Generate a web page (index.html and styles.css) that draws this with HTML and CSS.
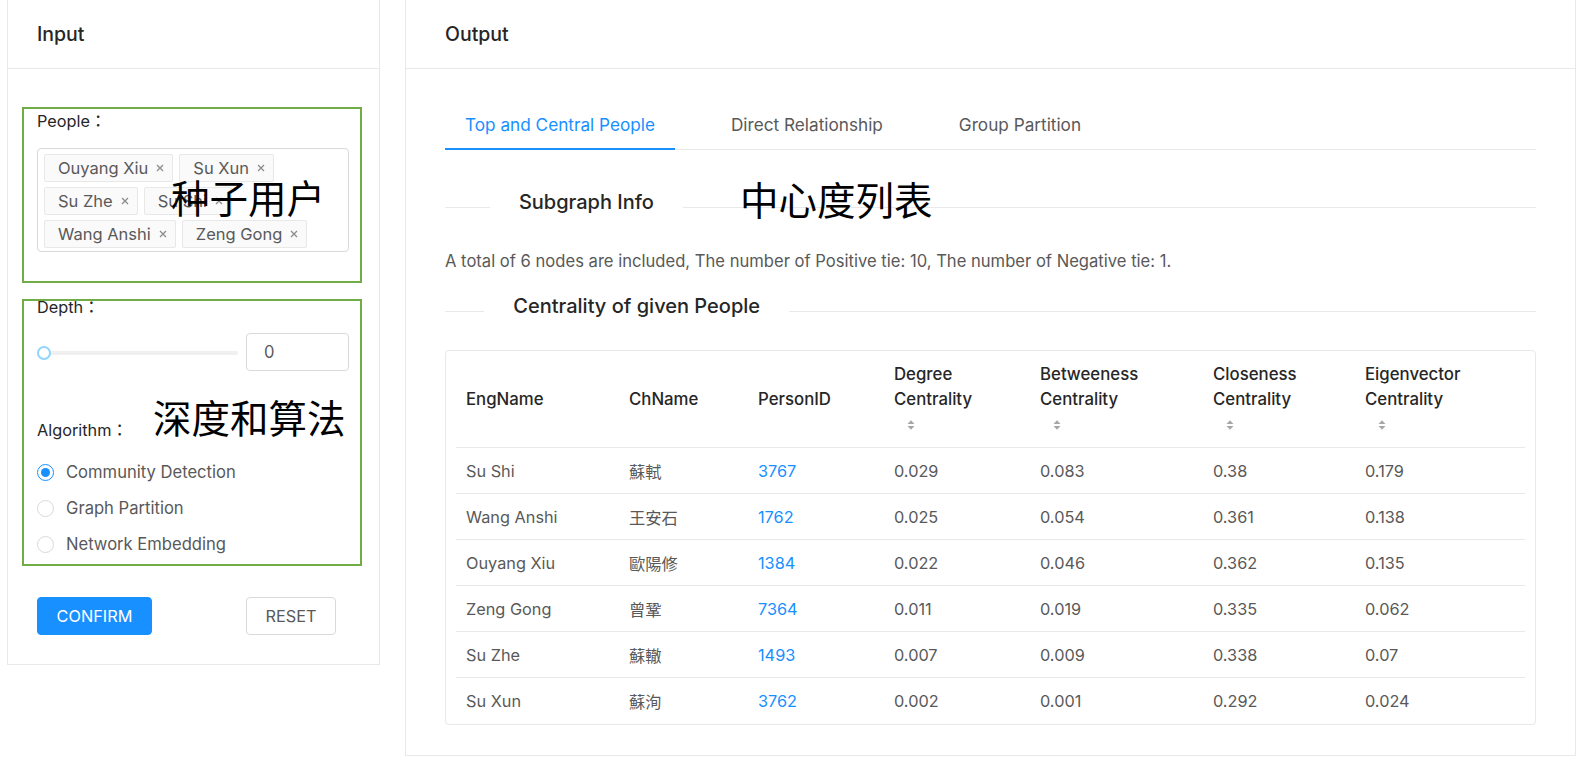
FILE: index.html
```html
<!DOCTYPE html>
<html lang="en">
<head>
<meta charset="utf-8">
<title>Subgraph</title>
<link rel="stylesheet" href="styles.css">
</head>
<body>
<div class="page">
  <section class="card card-input">
    <div class="card-head">Input</div>
    <div class="form">
      <div class="label">People：</div>
      <div class="select">
        <span class="tag">Ouyang Xiu<svg class="x" viewBox="0 0 10 10"><path d="M2 2L8 8M8 2L2 8"/></svg></span>
        <span class="tag">Su Xun<svg class="x" viewBox="0 0 10 10"><path d="M2 2L8 8M8 2L2 8"/></svg></span>
        <span class="tag">Su Zhe<svg class="x" viewBox="0 0 10 10"><path d="M2 2L8 8M8 2L2 8"/></svg></span>
        <span class="tag">Su Shi<svg class="x" viewBox="0 0 10 10"><path d="M2 2L8 8M8 2L2 8"/></svg></span>
        <span class="tag">Wang Anshi<svg class="x" viewBox="0 0 10 10"><path d="M2 2L8 8M8 2L2 8"/></svg></span>
        <span class="tag">Zeng Gong<svg class="x" viewBox="0 0 10 10"><path d="M2 2L8 8M8 2L2 8"/></svg></span>
      </div>
      <div class="label label-depth">Depth：</div>
      <div class="slider-row">
        <div class="slider"><div class="rail"></div><div class="handle"></div></div>
        <div class="num">0</div>
      </div>
      <div class="label label-algo">Algorithm：</div>
      <div class="radios">
        <div class="radio checked"><span class="dot"></span>Community Detection</div>
        <div class="radio"><span class="dot"></span>Graph Partition</div>
        <div class="radio"><span class="dot"></span>Network Embedding</div>
      </div>
      <div class="btn-row">
        <button class="btn btn-primary">CONFIRM</button>
        <button class="btn btn-reset">RESET</button>
      </div>
    </div>
    <div class="anno-box box-people"></div>
    <div class="anno-box box-depth"></div>
    <div class="anno-text anno-seed">种子用户</div>
    <div class="anno-text anno-algo">深度和算法</div>
  </section>

  <section class="card card-output">
    <div class="card-head head-output">Output</div>
    <div class="out-body">
      <div class="tabs">
        <div class="tab active">Top and Central People</div>
        <div class="tab">Direct Relationship</div>
        <div class="tab">Group Partition</div>
      </div>
      <div class="divider div-info"><span class="dline dline-left"></span><span class="dtext">Subgraph Info</span><span class="dline dline-right"></span></div>
      <p class="summary">A total of 6 nodes are included, The number of Positive tie: 10, The number of Negative tie: 1.</p>
      <div class="divider div-cent"><span class="dline dline-left"></span><span class="dtext">Centrality of given People</span><span class="dline dline-right"></span></div>
      <div class="table-card">
        <table class="ctable">
          <colgroup>
            <col class="c-eng"><col class="c-ch"><col class="c-id"><col class="c-deg"><col class="c-bet"><col class="c-clo"><col class="c-eig">
          </colgroup>
          <thead>
            <tr>
              <th>EngName</th>
              <th>ChName</th>
              <th>PersonID</th>
              <th>Degree<br>Centrality<span class="sorter"><svg viewBox="0 0 8 12"><path d="M0.5 5L4 1.2L7.5 5Z"/><path d="M0.5 7L4 10.8L7.5 7Z"/></svg></span></th>
              <th>Betweeness<br>Centrality<span class="sorter"><svg viewBox="0 0 8 12"><path d="M0.5 5L4 1.2L7.5 5Z"/><path d="M0.5 7L4 10.8L7.5 7Z"/></svg></span></th>
              <th>Closeness<br>Centrality<span class="sorter"><svg viewBox="0 0 8 12"><path d="M0.5 5L4 1.2L7.5 5Z"/><path d="M0.5 7L4 10.8L7.5 7Z"/></svg></span></th>
              <th>Eigenvector<br>Centrality<span class="sorter"><svg viewBox="0 0 8 12"><path d="M0.5 5L4 1.2L7.5 5Z"/><path d="M0.5 7L4 10.8L7.5 7Z"/></svg></span></th>
            </tr>
          </thead>
          <tbody>
            <tr><td>Su Shi</td><td>蘇軾</td><td class="pid">3767</td><td>0.029</td><td>0.083</td><td>0.38</td><td>0.179</td></tr>
            <tr><td>Wang Anshi</td><td>王安石</td><td class="pid">1762</td><td>0.025</td><td>0.054</td><td>0.361</td><td>0.138</td></tr>
            <tr><td>Ouyang Xiu</td><td>歐陽修</td><td class="pid">1384</td><td>0.022</td><td>0.046</td><td>0.362</td><td>0.135</td></tr>
            <tr><td>Zeng Gong</td><td>曾鞏</td><td class="pid">7364</td><td>0.011</td><td>0.019</td><td>0.335</td><td>0.062</td></tr>
            <tr><td>Su Zhe</td><td>蘇轍</td><td class="pid">1493</td><td>0.007</td><td>0.009</td><td>0.338</td><td>0.07</td></tr>
            <tr><td>Su Xun</td><td>蘇洵</td><td class="pid">3762</td><td>0.002</td><td>0.001</td><td>0.292</td><td>0.024</td></tr>
          </tbody>
        </table>
      </div>
    </div>
    <div class="anno-text anno-cent">中心度列表</div>
  </section>
</div>
</body>
</html>
```

FILE: styles.css
```css
* { box-sizing: border-box; }
html, body { margin: 0; padding: 0; background: #fff; }
body {
  font-family: Inter, "Noto Sans CJK TC", "Noto Sans CJK SC", sans-serif;
  font-size: 16px;
  color: #595959;
}
.page {
  display: flex;
  align-items: flex-start;
  gap: 25px;
  padding-left: 7px;
}
.card {
  position: relative;
  background: #fff;
  border: 1px solid #e8e8e8;
  border-top: none;
}
.card-input { width: 373px; }
.card-output { width: 1171px; }
.card-head {
  height: 69px;
  border-bottom: 1px solid #e8e8e8;
  display: flex;
  align-items: center;
  padding-left: 29px;
  font-size: 19.5px;
  font-weight: 500;
  color: #262626;
}
.head-output { padding-left: 39px; }

/* form */
.form {
  display: flex;
  flex-direction: column;
  padding: 41px 30px 29px 29px;
}
.label {
  line-height: 22px;
  font-size: 16.3px;
  color: #262626;
}
.select {
  margin-top: 16px;
  border: 1px solid #d9d9d9;
  border-radius: 4px;
  padding: 5px 6px 3px;
  display: flex;
  flex-wrap: wrap;
  gap: 5px 6px;
}
.tag {
  display: inline-flex;
  align-items: center;
  height: 28px;
  padding: 0 7px 0 13px;
  background: #fafafa;
  border: 1px solid #e8e8e8;
  border-radius: 2px;
  color: #595959;
  font-size: 16.5px;
}
.tag .x {
  width: 10px;
  height: 10px;
  margin-left: 7px;
  stroke: #8c8c8c;
  stroke-width: 1.3;
  fill: none;
}
.label-depth { margin-top: 44px; }
.slider-row {
  margin-top: 15px;
  display: grid;
  grid-template-columns: 201px 103px;
  gap: 8px;
  height: 38px;
}
.slider { position: relative; }
.rail {
  margin-top: 18px;
  height: 4px;
  border-radius: 2px;
  background: #f0f0f0;
}
.handle {
  position: absolute;
  left: 0;
  top: 13px;
  width: 14px;
  height: 14px;
  border-radius: 50%;
  background: #fff;
  border: 2px solid #91d5ff;
}
.num {
  border: 1px solid #d9d9d9;
  border-radius: 4px;
  padding-left: 17px;
  line-height: 36px;
  color: #595959;
  font-size: 16.6px;
}
.label-algo { margin-top: 48px; }
.radios {
  margin-top: 13px;
  display: flex;
  flex-direction: column;
}
.radio {
  height: 36px;
  display: flex;
  align-items: center;
  color: #595959;
  font-size: 16.6px;
}
.dot {
  width: 17px;
  height: 17px;
  border-radius: 50%;
  border: 1px solid #d9d9d9;
  margin-right: 12px;
  display: flex;
  align-items: center;
  justify-content: center;
  background: #fff;
}
.radio.checked .dot { border-color: #1890ff; }
.radio.checked .dot::after {
  content: "";
  width: 9px;
  height: 9px;
  border-radius: 50%;
  background: #1890ff;
}
.btn-row {
  margin-top: 35px;
  display: grid;
  grid-template-columns: 201px 103px;
  gap: 8px;
}
.btn {
  height: 38px;
  border-radius: 4px;
  border: 1px solid #d9d9d9;
  background: #fff;
  color: #595959;
  font-family: inherit;
  font-size: 16.3px;
  padding: 0;
  justify-self: start;
}
.btn-primary {
  width: 115px;
  background: #1890ff;
  border-color: #1890ff;
  color: #fff;
}
.btn-reset { width: 90px; }

/* annotations */
.anno-box {
  position: absolute;
  border: 2px solid #70ad47;
  left: 14px;
  width: 340px;
}
.box-people { top: 107px; height: 176px; }
.box-depth { top: 299px; height: 267px; }
.anno-text {
  position: absolute;
  font-family: "Noto Sans CJK SC", sans-serif;
  font-size: 38.5px;
  line-height: 38px;
  color: #000;
  white-space: nowrap;
}
.anno-seed { left: 163px; top: 177px; }
.anno-algo { left: 145px; top: 397px; }
.anno-cent { left: 334px; top: 179px; }

/* output */
.out-body { padding: 32px 39px 30px 39px; }
.tabs {
  display: flex;
  border-bottom: 1px solid #e8e8e8;
}
.tab {
  padding: 12px 20px 11px;
  line-height: 24px;
  font-size: 17.2px;
  margin-right: 36px;
  margin-bottom: -1px;
  border-bottom: 2px solid transparent;
  color: #595959;
}
.tab.active {
  color: #1890ff;
  border-bottom-color: #1890ff;
}
.divider {
  display: flex;
  align-items: center;
  height: 24px;
}
.div-info { margin-top: 40px; }
.div-cent { margin-top: 21px; }
.dline {
  border-top: 1px solid #e8e8e8;
  transform: translateY(5px);
}
.dline-left { flex: 5 1 0; }
.dline-right { flex: 95 1 0; }
.dtext {
  padding: 0 29px;
  font-size: 20px;
  font-weight: 500;
  color: #262626;
  white-space: nowrap;
}
.summary {
  margin: 35px 0 0;
  line-height: 24px;
  font-size: 16.6px;
  color: #595959;
}
.table-card {
  margin-top: 32px;
  border: 1px solid #e8e8e8;
  border-radius: 4px;
  padding: 0 10px;
}
.ctable {
  width: 100%;
  border-collapse: collapse;
  table-layout: fixed;
}
.c-eng { width: 163px; }
.c-ch { width: 129px; }
.c-id { width: 136px; }
.c-deg { width: 146px; }
.c-bet { width: 173px; }
.c-clo { width: 152px; }
.ctable th {
  text-align: left;
  vertical-align: middle;
  padding: 11px 10px 10px;
  line-height: 25px;
  font-size: 16.8px;
  font-weight: 500;
  color: #262626;
  border-bottom: 1px solid #e8e8e8;
}
.sorter {
  display: block;
  height: 25px;
  padding-left: 13px;
  padding-top: 7px;
}
.sorter svg {
  display: block;
  width: 8px;
  height: 12px;
  fill: #a6a6a6;
}
.ctable td {
  height: 46px;
  padding: 0 10px;
  border-bottom: 1px solid #e8e8e8;
  color: #595959;
  font-size: 16.3px;
}
.ctable tbody tr:last-child td { border-bottom: none; }
.ctable td.pid { color: #1890ff; }
```
